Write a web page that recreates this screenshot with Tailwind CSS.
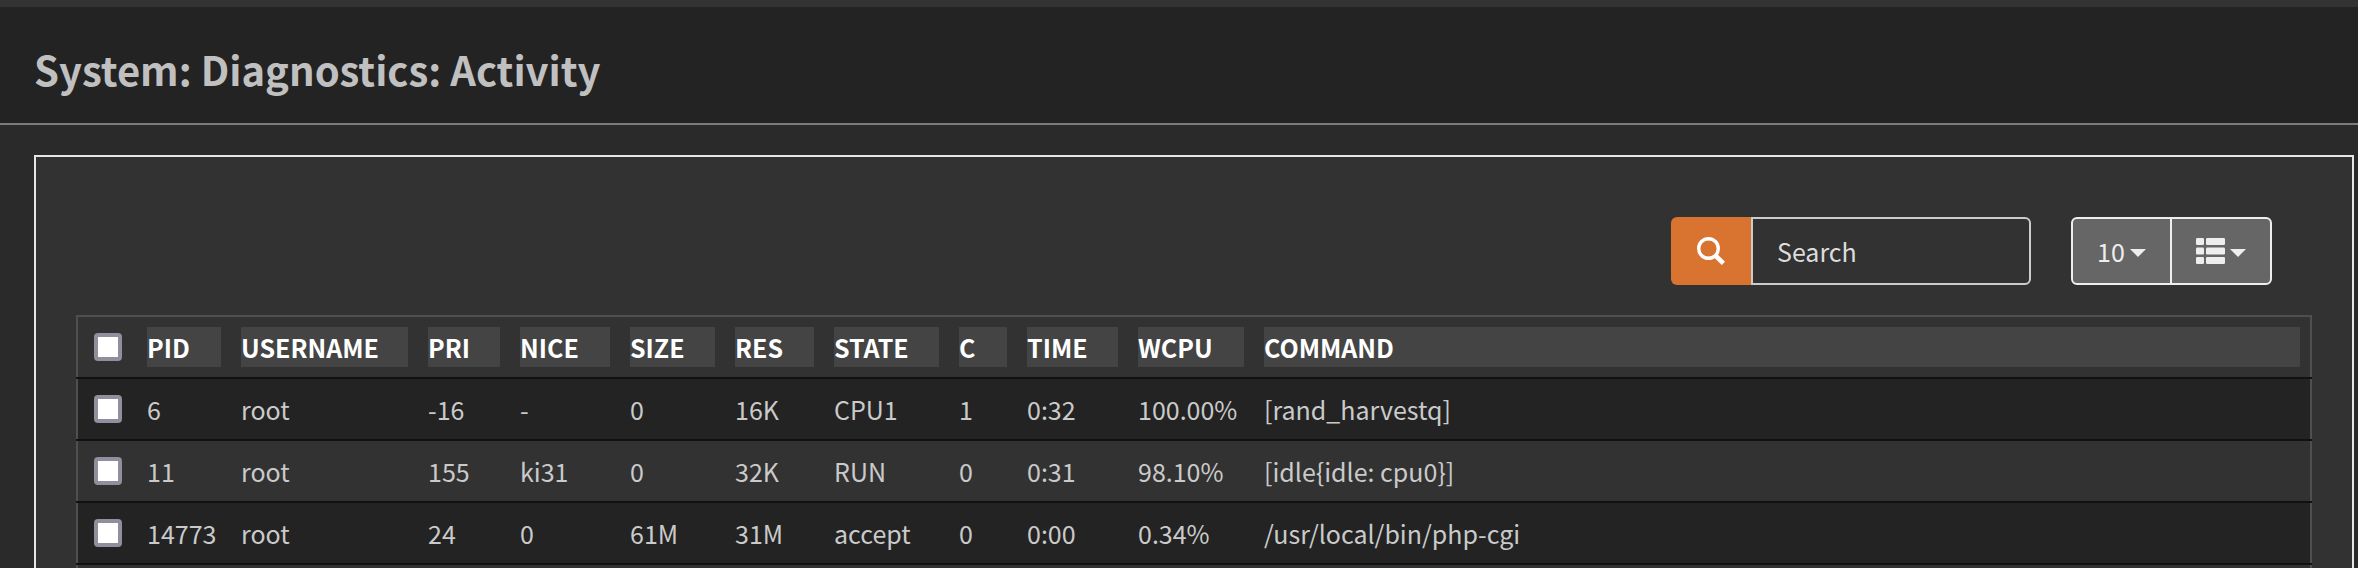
<!DOCTYPE html>
<html lang="en">
<head>
    <meta charset="UTF-8">
    <meta name="viewport" content="width=device-width, initial-scale=1.0">
    <title>System: Diagnostics: Activity</title>

    <!-- Tailwind CSS -->
    <script src="https://cdn.jsdelivr.net/npm/@tailwindcss/browser@4"></script>
</head>
<body class="h-screen overflow-hidden flex flex-col bg-[#2a2a2a] text-[#cacaca] text-[25px] leading-[40px] font-['Noto_Sans_CJK_SC','Source_Sans_Pro',sans-serif]">
    <header class="shrink-0 bg-[#232323] border-t-7 border-t-[#333333] border-b-2 border-b-[#7b7b7b] px-[34px] pt-8 pb-6">
        <h1 class="text-[40px] leading-[60px] font-bold text-[#c0c0c0]">System: Diagnostics: Activity</h1>
    </header>

    <main class="grow mt-[30px] ml-[34px] mr-1 px-10 pt-[60px] bg-[#323232] border-2 border-b-0 border-[#e6e6e6]">
        <!-- Search and table controls -->
        <div class="flex justify-end gap-10 pr-10 mb-[30px]">
            <div class="flex h-[68px]">
                <label for="search" class="w-20 flex items-center justify-center rounded-l-md bg-[#d97330]">
                    <svg class="size-7" viewBox="0 0 28 28" fill="none" stroke="#fff" aria-hidden="true">
                        <circle cx="11.5" cy="11.5" r="9.8" stroke-width="3.4"/>
                        <path d="M18 18l8.4 8.4" stroke-width="4.6"/>
                    </svg>
                </label>
                <input type="text" id="search" placeholder="Search" aria-label="Search" class="w-[280px] px-6 rounded-r-md border-2 border-[#cccccc] bg-[#323232] placeholder:text-[#dcdcdc] outline-none">
            </div>
            <div class="flex h-[68px]">
                <button type="button" class="w-[101px] flex items-center justify-center gap-[5px] rounded-l-md border-2 border-[#eeeeee] bg-[#666666] text-[#eeeeee]">
                    <span>10</span>
                    <svg class="w-4 h-2 mt-1" viewBox="0 0 16 8" fill="currentColor" aria-hidden="true"><path d="M0 0h16L8 8z"/></svg>
                </button>
                <button type="button" aria-label="Columns" class="w-[102px] -ml-0.5 flex items-center justify-center gap-[5px] rounded-r-md border-2 border-[#eeeeee] bg-[#666666] text-[#eeeeee]">
                    <svg class="w-[29px] h-[26px]" viewBox="0 0 29 26" fill="currentColor" aria-hidden="true">
                        <rect x="0" y="0" width="8" height="7" rx="1.2"/>
                        <rect x="10" y="0" width="19" height="7" rx="1.2"/>
                        <rect x="0" y="9.5" width="8" height="7" rx="1.2"/>
                        <rect x="10" y="9.5" width="19" height="7" rx="1.2"/>
                        <rect x="0" y="19" width="8" height="7" rx="1.2"/>
                        <rect x="10" y="19" width="19" height="7" rx="1.2"/>
                    </svg>
                    <svg class="w-4 h-2 mt-1" viewBox="0 0 16 8" fill="currentColor" aria-hidden="true"><path d="M0 0h16L8 8z"/></svg>
                </button>
            </div>
        </div>

        <!-- Process list -->
        <table class="w-full table-fixed border-collapse border-2 border-[#4f4f4f] text-left whitespace-nowrap">
            <colgroup>
                <col class="w-[60px]">
                <col class="w-[94px]">
                <col class="w-[187px]">
                <col class="w-[92px]">
                <col class="w-[110px]">
                <col class="w-[105px]">
                <col class="w-[99px]">
                <col class="w-[125px]">
                <col class="w-[68px]">
                <col class="w-[111px]">
                <col class="w-[126px]">
                <col>
            </colgroup>
            <thead class="text-white">
                <tr>
                    <th class="p-2.5"><input type="checkbox" aria-label="Select all" class="block mx-auto size-7 appearance-none rounded border-4 border-[#8f8f9d] bg-white"></th>
                    <th class="p-2.5"><div class="bg-[#444444]">PID</div></th>
                    <th class="p-2.5"><div class="bg-[#444444]">USERNAME</div></th>
                    <th class="p-2.5"><div class="bg-[#444444]">PRI</div></th>
                    <th class="p-2.5"><div class="bg-[#444444]">NICE</div></th>
                    <th class="p-2.5"><div class="bg-[#444444]">SIZE</div></th>
                    <th class="p-2.5"><div class="bg-[#444444]">RES</div></th>
                    <th class="p-2.5"><div class="bg-[#444444]">STATE</div></th>
                    <th class="p-2.5"><div class="bg-[#444444]">C</div></th>
                    <th class="p-2.5"><div class="bg-[#444444]">TIME</div></th>
                    <th class="p-2.5"><div class="bg-[#444444]">WCPU</div></th>
                    <th class="p-2.5"><div class="bg-[#444444]">COMMAND</div></th>
                </tr>
            </thead>
            <tbody>
                <tr class="bg-[#232323]">
                    <td class="p-2.5 border-t-2 border-t-[#111111]"><input type="checkbox" aria-label="Select 6" class="block mx-auto size-7 appearance-none rounded border-4 border-[#8f8f9d] bg-white"></td>
                    <td class="p-2.5 border-t-2 border-t-[#111111]">6</td>
                    <td class="p-2.5 border-t-2 border-t-[#111111]">root</td>
                    <td class="p-2.5 border-t-2 border-t-[#111111]">-16</td>
                    <td class="p-2.5 border-t-2 border-t-[#111111]">-</td>
                    <td class="p-2.5 border-t-2 border-t-[#111111]">0</td>
                    <td class="p-2.5 border-t-2 border-t-[#111111]">16K</td>
                    <td class="p-2.5 border-t-2 border-t-[#111111]">CPU1</td>
                    <td class="p-2.5 border-t-2 border-t-[#111111]">1</td>
                    <td class="p-2.5 border-t-2 border-t-[#111111]">0:32</td>
                    <td class="p-2.5 border-t-2 border-t-[#111111]">100.00%</td>
                    <td class="p-2.5 border-t-2 border-t-[#111111]">[rand_harvestq]</td>
                </tr>
                <tr>
                    <td class="p-2.5 border-t-2 border-t-[#111111]"><input type="checkbox" aria-label="Select 11" class="block mx-auto size-7 appearance-none rounded border-4 border-[#8f8f9d] bg-white"></td>
                    <td class="p-2.5 border-t-2 border-t-[#111111]">11</td>
                    <td class="p-2.5 border-t-2 border-t-[#111111]">root</td>
                    <td class="p-2.5 border-t-2 border-t-[#111111]">155</td>
                    <td class="p-2.5 border-t-2 border-t-[#111111]">ki31</td>
                    <td class="p-2.5 border-t-2 border-t-[#111111]">0</td>
                    <td class="p-2.5 border-t-2 border-t-[#111111]">32K</td>
                    <td class="p-2.5 border-t-2 border-t-[#111111]">RUN</td>
                    <td class="p-2.5 border-t-2 border-t-[#111111]">0</td>
                    <td class="p-2.5 border-t-2 border-t-[#111111]">0:31</td>
                    <td class="p-2.5 border-t-2 border-t-[#111111]">98.10%</td>
                    <td class="p-2.5 border-t-2 border-t-[#111111]">[idle{idle: cpu0}]</td>
                </tr>
                <tr class="bg-[#232323]">
                    <td class="p-2.5 border-t-2 border-t-[#111111]"><input type="checkbox" aria-label="Select 14773" class="block mx-auto size-7 appearance-none rounded border-4 border-[#8f8f9d] bg-white"></td>
                    <td class="p-2.5 border-t-2 border-t-[#111111]">14773</td>
                    <td class="p-2.5 border-t-2 border-t-[#111111]">root</td>
                    <td class="p-2.5 border-t-2 border-t-[#111111]">24</td>
                    <td class="p-2.5 border-t-2 border-t-[#111111]">0</td>
                    <td class="p-2.5 border-t-2 border-t-[#111111]">61M</td>
                    <td class="p-2.5 border-t-2 border-t-[#111111]">31M</td>
                    <td class="p-2.5 border-t-2 border-t-[#111111]">accept</td>
                    <td class="p-2.5 border-t-2 border-t-[#111111]">0</td>
                    <td class="p-2.5 border-t-2 border-t-[#111111]">0:00</td>
                    <td class="p-2.5 border-t-2 border-t-[#111111]">0.34%</td>
                    <td class="p-2.5 border-t-2 border-t-[#111111]">/usr/local/bin/php-cgi</td>
                </tr>
                <tr>
                    <td colspan="12" class="p-2.5 border-t-2 border-t-[#111111]"></td>
                </tr>
            </tbody>
        </table>
    </main>
</body>
</html>
